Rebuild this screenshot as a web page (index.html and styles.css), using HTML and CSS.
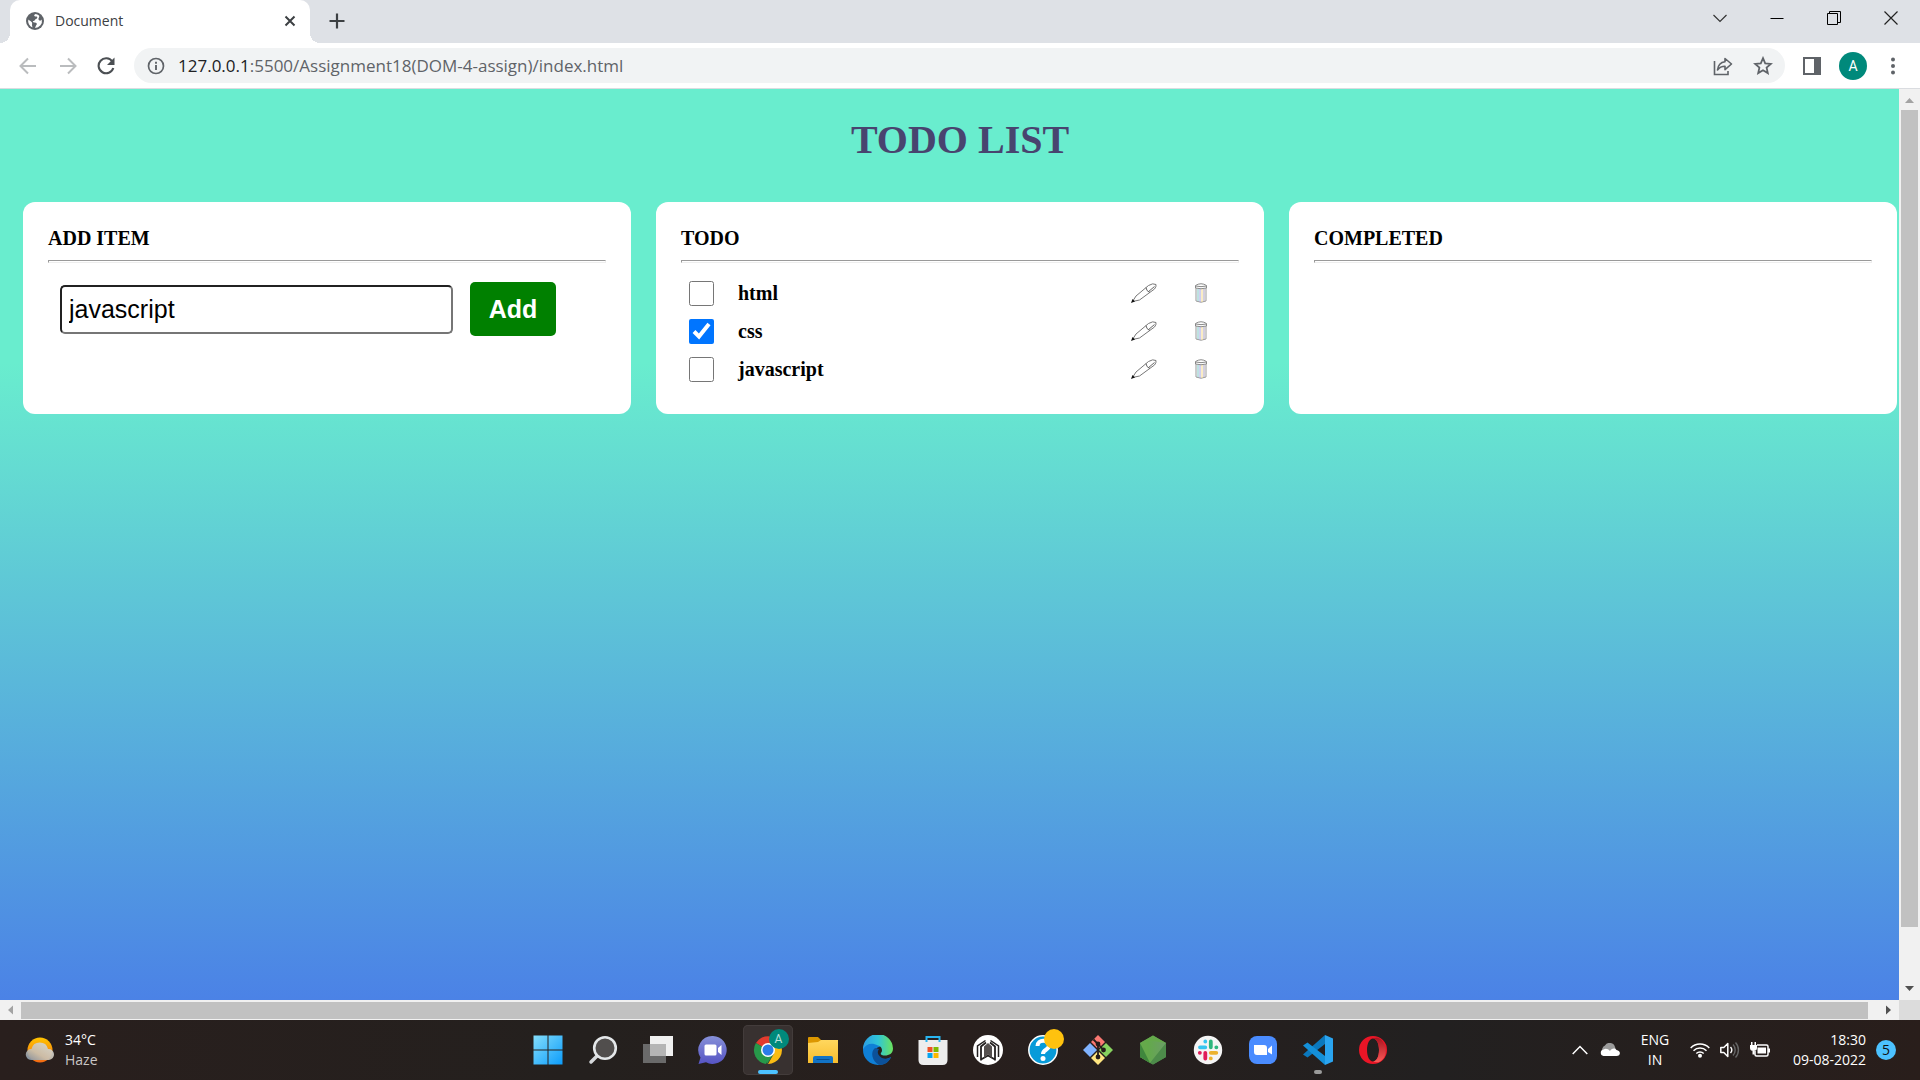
FILE: index.html
```html
<!DOCTYPE html>
<html lang="en">
<head>
<meta charset="utf-8">
<title>Document</title>
<link rel="stylesheet" href="styles.css">
</head>
<body>
<header class="browser">
  <div class="tabstrip">
    <div class="tab">
      <svg class="globe" width="18" height="18" viewBox="0 0 18 18"><circle cx="9" cy="9" r="9" fill="#5f6368"/><path d="M9.500 2C7.500 3 8 4.500 10 4.500c2 0 1.500 2 0 2.500-1.500.5-1 2-2.500 2-1 0-1 1.500 1 1.500 2.500 0 3 1.500 1.500 3L9 16a7 7 0 0 0 6.800-8.500C15 9 13 9 12.500 7.500 12 6 14 5 13 3.500A7 7 0 0 0 9.500 2zM2.300 7.500c1 1 2.500 1.500 3.700 3 .5 1-.5 2 .5 5A7 7 0 0 1 2.300 7.500z" fill="#fff"/></svg>
      <span class="tab-title">Document</span>
      <button class="plain tab-close" aria-label="Close tab"><svg width="12" height="12" viewBox="0 0 12 12"><path d="M1.500 1.500l9 9M10.500 1.500l-9 9" stroke="#3c4043" stroke-width="2"/></svg></button>
    </div>
    <button class="plain new-tab" aria-label="New tab"><svg width="16" height="16" viewBox="0 0 16 16"><path d="M8 0.500v15M0.500 8h15" stroke="#3c4043" stroke-width="2.200"/></svg></button>
    <div class="window-controls">
      <button class="plain" aria-label="Search tabs"><svg width="14" height="14" viewBox="0 0 14 14"><path d="M.5 4L7 10.500 13.500 4" fill="none" stroke="#333" stroke-width="1.200"/></svg></button>
      <button class="plain" aria-label="Minimise"><svg width="14" height="14" viewBox="0 0 14 14"><path d="M.5 7.500h13" stroke="#000"/></svg></button>
      <button class="plain" aria-label="Restore"><svg width="14" height="14" viewBox="0 0 14 14"><path d="M.5 2.500h10v11H.5zM2.500 2.500v-2h11v11h-3" fill="none" stroke="#000"/></svg></button>
      <button class="plain" aria-label="Close"><svg width="14" height="14" viewBox="0 0 14 14"><path d="M.5.5l13 13M13.500.5l-13 13" stroke="#222" stroke-width="1.200"/></svg></button>
    </div>
  </div>
  <div class="toolbar">
    <button class="plain" aria-label="Back"><svg width="18" height="18" viewBox="0 0 18 18"><path d="M17 9H2M9 1.500L1.500 9 9 16.500" fill="none" stroke="#babcbe" stroke-width="2"/></svg></button>
    <button class="plain" aria-label="Forward"><svg width="18" height="18" viewBox="0 0 18 18"><path d="M1 9h15M9 1.500L16.500 9 9 16.500" fill="none" stroke="#babcbe" stroke-width="2"/></svg></button>
    <button class="plain" aria-label="Reload"><svg width="18" height="18" viewBox="0 0 18 18"><path d="M15.300 4.500A7.500 7.500 0 1 0 16.300 11" fill="none" stroke="#4b4f53" stroke-width="2.100"/><path d="M17.500.5v7.500H10z" fill="#4b4f53"/></svg></button>
    <div class="address">
      <svg width="18" height="18" viewBox="0 0 18 18"><circle cx="9" cy="9" r="7.500" fill="none" stroke="#5f6368" stroke-width="1.700"/><path d="M9 8v5M9 4.700v2" stroke="#5f6368" stroke-width="1.900"/></svg>
      <span class="url"><span class="host">127.0.0.1</span>:5500/Assignment18(DOM-4-assign)/index.html</span>
      <button class="plain" aria-label="Share"><svg width="20" height="20" viewBox="0 0 20 20"><path d="M1.500 5v13.500H15V15" fill="none" stroke="#5f6368" stroke-width="1.600"/><path d="M12 2.500v3.300C7.500 6.300 5 9.500 4.500 14c2-2.800 4.300-3.800 7.500-3.800v3.500l6.500-5.700z" fill="none" stroke="#5f6368" stroke-width="1.600" stroke-linejoin="round"/></svg></button>
      <button class="plain" aria-label="Bookmark"><svg width="20" height="20" viewBox="0 0 20 20"><path d="M10 2.200l2.200 5.200 5.600.5-4.200 3.700 1.200 5.500-4.800-2.900-4.800 2.900 1.200-5.500L2.200 7.900l5.600-.5z" fill="none" stroke="#5f6368" stroke-width="1.800"/></svg></button>
    </div>
    <button class="plain" aria-label="Side panel"><svg width="18" height="18" viewBox="0 0 18 18"><path d="M0 0h18v18H0zM2 2v14h9V2z" fill="#5f6368" fill-rule="evenodd"/></svg></button>
    <button class="plain avatar">A</button>
    <button class="plain menu" aria-label="Menu"><svg width="6" height="18" viewBox="0 0 6 18"><g fill="#5f6368"><circle cx="3" cy="2.500" r="2"/><circle cx="3" cy="9" r="2"/><circle cx="3" cy="15.500" r="2"/></g></svg></button>
  </div>
</header>

<div class="viewport">
  <main class="page">
    <h1 class="title">TODO LIST</h1>
    <div class="cards">
      <section class="card">
        <h2 class="card-title">ADD ITEM</h2>
        <hr class="rule">
        <form class="add-form" onsubmit="return false">
          <input class="add-input" type="text" value="javascript" aria-label="New item">
          <button class="add-button" type="submit">Add</button>
        </form>
      </section>
      <section class="card">
        <h2 class="card-title">TODO</h2>
        <hr class="rule">
        <ul class="todo-list">
          <li class="todo-row">
            <input class="tick" type="checkbox" id="item-html"><label class="todo-text" for="item-html">html</label>
            <button class="plain" aria-label="Edit html"><svg width="26" height="20" viewBox="0 0 26 20"><use href="#pen"/></svg></button>
            <button class="plain" aria-label="Delete html"><svg width="12" height="20" viewBox="0 0 12 20"><use href="#bin"/></svg></button>
          </li>
          <li class="todo-row">
            <input class="tick" type="checkbox" id="item-css" checked><label class="todo-text" for="item-css">css</label>
            <button class="plain" aria-label="Edit css"><svg width="26" height="20" viewBox="0 0 26 20"><use href="#pen"/></svg></button>
            <button class="plain" aria-label="Delete css"><svg width="12" height="20" viewBox="0 0 12 20"><use href="#bin"/></svg></button>
          </li>
          <li class="todo-row">
            <input class="tick" type="checkbox" id="item-js"><label class="todo-text" for="item-js">javascript</label>
            <button class="plain" aria-label="Edit javascript"><svg width="26" height="20" viewBox="0 0 26 20"><use href="#pen"/></svg></button>
            <button class="plain" aria-label="Delete javascript"><svg width="12" height="20" viewBox="0 0 12 20"><use href="#bin"/></svg></button>
          </li>
        </ul>
      </section>
      <section class="card">
        <h2 class="card-title">COMPLETED</h2>
        <hr class="rule">
      </section>
    </div>
  </main>
  <div class="scroll-y">
    <svg width="21" height="21" viewBox="0 0 21 21"><path d="M6 14l4.500-5 4.500 5z" fill="#a3a3a3"/></svg>
    <div class="thumb-y"></div>
    <div class="rest-y"></div>
    <svg width="21" height="21" viewBox="0 0 21 21"><path d="M6 7l4.500 5L15 7z" fill="#505050"/></svg>
  </div>
  <div class="scroll-x">
    <svg width="21" height="20" viewBox="0 0 21 20"><path d="M13 5.500v9L8 10z" fill="#a3a3a3"/></svg>
    <div class="thumb-x"></div>
    <div class="rest-x"></div>
    <svg width="21" height="20" viewBox="0 0 21 20"><path d="M8 5.500v9l5-4.500z" fill="#505050"/></svg>
  </div>
  <div class="corner"></div>
</div>

<footer class="taskbar">
  <div class="weather">
    <svg width="30" height="28" viewBox="0 0 30 28"><circle cx="15" cy="14" r="12.500" fill="url(#sun)"/><path d="M6 24a5.500 5.500 0 0 1 .5-11 8.500 8.500 0 0 1 16.500 0A5.500 5.500 0 0 1 24 24z" fill="url(#cloud)" opacity=".93"/></svg>
    <div class="weather-text"><span>34°C</span><span class="dim">Haze</span></div>
  </div>
  <nav class="apps" aria-label="Apps">
    <button class="plain app" aria-label="Start"><svg width="30" height="30" viewBox="0 0 30 30"><path d="M.5.5h14v14H.5zM15.500.5h14v14h-14zM.5 15.500h14v14H.5zM15.500 15.500h14v14h-14z" fill="url(#win)"/></svg></button>
    <button class="plain app" aria-label="Search"><svg width="30" height="30" viewBox="0 0 30 30"><path d="M9.500 20.500L3 27" stroke="#d5d8db" stroke-width="3.500" stroke-linecap="round"/><circle cx="17" cy="13" r="10.800" fill="#514e4d" stroke="#e4e7e9" stroke-width="2.600"/></svg></button>
    <button class="plain app" aria-label="Task view"><svg width="30" height="30" viewBox="0 0 30 30"><path d="M0 9h23v19H0z" fill="#6a6a6a"/><path d="M7 1h23v20H7z" fill="#f0f0f0"/><path d="M7 9h16v12H7z" fill="#b5b5b5"/></svg></button>
    <button class="plain app" aria-label="Chat"><svg width="30" height="30" viewBox="0 0 30 30"><path d="M15 1a14 14 0 1 1-7 26.300L.5 29l2-6.500A14 14 0 0 1 15 1z" fill="url(#chat)"/><rect x="6.500" y="9.500" width="12" height="11" rx="1.500" fill="#fff"/><path d="M20 13l3.500-3v10L20 17z" fill="#fff"/></svg></button>
    <button class="plain app active" aria-label="Chrome"><svg width="30" height="30" viewBox="0 0 30 30"><path d="M15 15L3 8a14 14 0 0 1 24.100 0z" fill="#e33b2e"/><path d="M15 15l-2 14A14 14 0 0 1 2.900 8z" fill="#27994a"/><path d="M9 18.500L14 29l7-10.500z" fill="#27994a"/><path d="M15 29a14 14 0 0 0 12.100-21H15l6 10.500z" fill="#fbbc14"/><circle cx="15" cy="15" r="7" fill="#fff"/><circle cx="15" cy="15" r="5.500" fill="#2b7de9"/></svg><span class="profile">A</span></button>
    <button class="plain app" aria-label="File Explorer"><svg width="30" height="30" viewBox="0 0 30 30"><path d="M0 3q0-1 1-1h9l3 3v6H0z" fill="#dc9700"/><path d="M0 8l10-1 3-2h17v23H0z" fill="url(#folder)"/><path d="M5 28v-5q0-2 2-2h16q2 0 2 2v5z" fill="#1273c5"/><path d="M8.500 24.500h13" stroke="#064e91"/></svg></button>
    <button class="plain app" aria-label="Edge"><svg width="30" height="30" viewBox="0 0 30 30"><path d="M0 15C0 9 6 6 11 8c5 1 6 4 6 4-6 0-6 8 0 11 4 2 8 1 11-1-2 5-7 8-13 8A15 15 0 0 1 0 15z" fill="#0f7fd6"/><path d="M12 13c-5 4-3 13 4 17 6 0 10-3 12-8-3 2-8 2.500-11-.5-2.500-2.500-3-5-1-7.500z" fill="#0c519a"/><path d="M0 14.500A15 15 0 0 1 30 13.500c0 5-4 7-8 7-3 0-5-1-4-2.500 2-2.500 1-6.500-3-7.500C9 7.500 3 8.500 0 14.500z" fill="url(#edge)"/></svg></button>
    <button class="plain app" aria-label="Store"><svg width="30" height="30" viewBox="0 0 30 30"><path d="M.5 5h29v20q0 5-5 5h-19q-5 0-5-5z" fill="#ededed"/><path d="M8.500 7V2h13v5" fill="none" stroke="#29b5f0" stroke-width="2"/><path d="M9.500 12h5v5h-5z" fill="#ef5125"/><path d="M15.500 12h5v5h-5z" fill="#7eb900"/><path d="M9.500 18h5v5h-5z" fill="#06a4ef"/><path d="M15.500 18h5v5h-5z" fill="#fdb800"/></svg></button>
    <button class="plain app" aria-label="Armoury"><svg width="30" height="30" viewBox="0 0 30 30"><circle cx="15" cy="15" r="15" fill="#fff"/><path d="M4.500 22V11L12.500 5.500M25.500 22V11L17.500 5.500" fill="none" stroke="#242121" stroke-width="1.500"/><path d="M8 25.500V11.500L13 7.500M22 25.500V11.500L17 7.500M8 24.500l7-4 7 4" fill="none" stroke="#242121" stroke-width="1.800"/><path d="M11 11.500L15 8l4 3.500V23l-4-3.500-4 3.500z" fill="#55504f"/></svg></button>
    <button class="plain app" aria-label="Help"><svg class="spill" width="30" height="42" viewBox="0 0 30 42"><circle cx="15" cy="21" r="14.200" fill="#079bd9" stroke="#fff" stroke-width="1.500"/><path d="M9.500 17c0-7 11.500-7 11.500-.5 0 4.500-6 4-6 8.500" fill="none" stroke="#fff" stroke-width="4"/><circle cx="15" cy="29.500" r="2.500" fill="#fff"/><circle cx="26" cy="10" r="10" fill="#ffc20e"/></svg></button>
    <button class="plain app" aria-label="Git"><svg width="30" height="30" viewBox="0 0 30 30"><path d="M15 0l7 7-7 7-7-7z" fill="#fa7872"/><path d="M0 15l7-7 7 7-7 7z" fill="#80b3ff"/><path d="M16 15l7-7 7 7-7 7z" fill="#87d35f"/><path d="M8 23l7-7 7 7-7 7z" fill="#ffe680"/><path d="M10.500 4.500L15 9v13M15 9l5.500 6" fill="none" stroke="#251c1a" stroke-width="1.800"/><g fill="#251c1a"><circle cx="15" cy="9" r="2.400"/><circle cx="15" cy="22" r="2.400"/><circle cx="20.500" cy="15" r="2.400"/></g></svg></button>
    <button class="plain app" aria-label="Node"><svg width="30" height="30" viewBox="0 0 30 30"><path d="M15 .5L28 8v14l-13 7.500L2 22V8z" fill="#57984d"/><path d="M2 8l13-7.500L28 8l-16 20L2 22z" fill="#65a94b"/><path d="M8 5l20 3-16 20z" fill="url(#node)"/><path d="M2 8l10 20-10-6z" fill="#3f873d"/><path d="M28 8L12 28l3 1.500L28 22z" fill="#4d8b4a"/></svg></button>
    <button class="plain app" aria-label="Slack"><svg width="30" height="30" viewBox="0 0 30 30"><circle cx="15" cy="15" r="14.200" fill="#f5f5f5"/><g stroke-width="3.800" stroke-linecap="round"><path d="M12.300 6.500v.1M7 12.300h5.300" stroke="#36c5f0"/><path d="M17.800 6.500v5.800M23.300 12.300h.1" stroke="#2eb67d"/><path d="M17.800 17.800h5.500M17.800 23.300v.1" stroke="#ecb22e"/><path d="M12.300 17.800v5.700M6.800 17.800h.1" stroke="#e01e5a"/></g></svg></button>
    <button class="plain app" aria-label="Zoom"><svg width="30" height="30" viewBox="0 0 30 30"><rect x="1" y="1" width="28" height="28" rx="8" fill="#4a8cff"/><path d="M6 10h10q3 0 3 3v7H9q-3 0-3-3zM20 14l4-3.500v9L20 17z" fill="#fff"/></svg></button>
    <button class="plain app running" aria-label="Code"><svg width="30" height="30" viewBox="0 0 30 30"><path d="M22 0l8 3.500v23L22 30z" fill="#2aa4f0"/><path d="M22 0v9L4.500 22.500 0 19.500z" fill="#0b78bd"/><path d="M0 10.500L4.500 7.500 22 21v9z" fill="#1490d9"/></svg></button>
    <button class="plain app" aria-label="Opera"><svg width="30" height="30" viewBox="0 0 30 30"><path d="M15 1a14 14 0 1 0 0 28 14 14 0 1 0 0-28zM15 3.500c3.500 0 6 5 6 11.500s-2.500 11.500-6 11.500S9 21.500 9 15s2.500-11.500 6-11.500z" fill="#ea1526" fill-rule="evenodd"/><path d="M15 3.500c5-2 9 1 10.500 4.500 4 6 2.500 14-2 17.500-3 2.500-6 2-8.500 1 3.500 0 6-5 6-11.500s-2.500-11.500-6-11.500z" fill="url(#opera)"/></svg></button>
  </nav>
  <div class="tray">
    <svg width="16" height="10" viewBox="0 0 16 10"><path d="M.7 9L8 1.500 15.300 9" fill="none" stroke="#fff" stroke-width="1.500"/></svg>
    <svg class="cloud" width="20" height="14" viewBox="0 0 20 14"><path d="M3 10a5 5 0 0 1 2-7.500A5.500 5.500 0 0 1 15 4l2 6z" fill="#9a9a9a"/><path d="M3.500 13a3.300 3.300 0 0 1 0-6.500C6 5 8 6 10 8c1-3 5.500-3.500 6.500-1 4.500.5 4.500 6 0 6z" fill="#fff"/></svg>
    <div class="language"><span>ENG</span><span>IN</span></div>
    <svg width="20" height="16" viewBox="0 0 20 16"><path d="M.7 6a13 13 0 0 1 18.600 0M3.500 8.800a9.200 9.200 0 0 1 13 0M6.300 11.500a5.300 5.300 0 0 1 7.400 0" fill="none" stroke="#fff" stroke-width="1.500"/><circle cx="10" cy="13.700" r="2" fill="#fff"/></svg>
    <svg width="20" height="16" viewBox="0 0 20 16"><path d="M.8 5.500h3l4-4v13l-4-4h-3z" fill="none" stroke="#fff" stroke-width="1.500" stroke-linejoin="round"/><path d="M10.500 5a4.500 4.500 0 0 1 0 6" fill="none" stroke="#fff" stroke-width="1.400"/><path d="M13 2.500a8 8 0 0 1 0 11M15.500.5a11 11 0 0 1 0 15" fill="none" stroke="#666" stroke-width="1.400"/></svg>
    <svg width="20" height="16" viewBox="0 0 20 16"><path d="M7 3h9.500q1.500 0 1.500 1.500v8q0 1.500-1.500 1.500H6.500Q5 14 5 12.500V9" fill="none" stroke="#fff" stroke-width="1.500"/><path d="M7.500 5.500H16v6H7.500zM18 6.500h2v4h-2zM0 3h7v3q0 3-3.500 3T0 6zM1 0h1.500v3H1zM4.500 0H6v3H4.500zM2.500 8.500h2v4h-2z" fill="#fff"/></svg>
    <div class="clock"><span>18:30</span><span>09-08-2022</span></div>
    <span class="count">5</span>
  </div>
</footer>

<svg class="defs" width="0" height="0" aria-hidden="true">
  <defs>
    <g id="pen"><path d="M1.500 18.500L5 13 17.500 2.500Q22-.3 25 1.500q.5 2-1.500 4.500L8.500 17z" fill="#fff" stroke="#777" stroke-width="1"/><path d="M15 4.500l1 3 3 2M17 9l6.500-5.500" fill="none" stroke="#666"/><path d="M0 20l1.500-4 2.500 2.500z" fill="#111"/></g>
    <g id="bin"><path d="M1 4.500V18q5 2.500 10 0V4.500z" fill="#fff" stroke="#999"/><path d="M3 6v12" stroke="#7fc4c4"/><path d="M5 6v13" stroke="#9da0e0"/><path d="M7 6v13" stroke="#f5d98c"/><path d="M9 6v12" stroke="#a8a0c0"/><path d="M.5 2.500Q6-1 11.500 2.500V5Q6 6.500.5 5z" fill="#fff" stroke="#888"/><path d="M.5 3q5.500 1.300 11 0" fill="none" stroke="#888"/></g>
    <linearGradient id="sun" x1="0" y1="0" x2="0" y2="1"><stop offset="0" stop-color="#ffc400"/><stop offset="1" stop-color="#f46a14"/></linearGradient>
    <linearGradient id="cloud" x1="1" y1="0" x2="0" y2="1"><stop offset="0" stop-color="#d5dce0"/><stop offset=".6" stop-color="#c9c0b0"/><stop offset="1" stop-color="#7d90a5"/></linearGradient>
    <linearGradient id="win" gradientUnits="userSpaceOnUse" x1="0" y1="0" x2="30" y2="30"><stop offset="0" stop-color="#86dffc"/><stop offset="1" stop-color="#0a9bfa"/></linearGradient>
    <linearGradient id="chat" x1="0" y1="0" x2="0" y2="1"><stop offset="0" stop-color="#8690d8"/><stop offset="1" stop-color="#5654c4"/></linearGradient>
    <linearGradient id="folder" x1="0" y1="0" x2="0" y2="1"><stop offset="0" stop-color="#ffd75e"/><stop offset="1" stop-color="#f8bd2d"/></linearGradient>
    <linearGradient id="edge"><stop offset="0" stop-color="#2b9de4"/><stop offset=".5" stop-color="#30c5d8"/><stop offset="1" stop-color="#6be35c"/></linearGradient>
    <linearGradient id="node"><stop offset="0" stop-color="#62ab47"/><stop offset="1" stop-color="#6c9c68"/></linearGradient>
    <linearGradient id="opera" x1="0" y1="0" x2="0" y2="1"><stop offset="0" stop-color="#a81420"/><stop offset="1" stop-color="#fa5a58"/></linearGradient>
  </defs>
</svg>
</body>
</html>
```
FILE: styles.css
```css
* {
  box-sizing: border-box;
}

body {
  margin: 0;
  min-height: 100vh;
  display: flex;
  flex-direction: column;
  font-family: "Open Sans", "Noto Sans", sans-serif;
  font-size: 14px;
  line-height: 20px;
}

svg {
  display: block;
  flex: none;
}

.defs {
  position: absolute;
}

.spill {
  overflow: visible;
}

.plain {
  border: 0;
  padding: 0;
  background: none;
  color: inherit;
  font: inherit;
  display: flex;
  align-items: center;
  justify-content: center;
  flex: none;
}

/* Browser chrome */
.tabstrip {
  display: flex;
  height: 43px;
  padding-left: 10px;
  background: #dee1e6;
}

.tab {
  position: relative;
  display: flex;
  align-items: center;
  gap: 11px;
  width: 300px;
  padding: 0 14px 2px 16px;
  background: #fff;
  border-radius: 10px 10px 0 0;
  color: #3c4043;
}

.tab::before,
.tab::after {
  content: "";
  position: absolute;
  bottom: 0;
  width: 10px;
  height: 10px;
}

.tab::before {
  right: 100%;
  background: radial-gradient(circle at 0 0, #dee1e6 10px, #fff 10px);
}

.tab::after {
  left: 100%;
  background: radial-gradient(circle at 100% 0, #dee1e6 10px, #fff 10px);
}

.tab-title {
  flex: 1;
}

.new-tab {
  width: 54px;
  padding-bottom: 2px;
}

.window-controls {
  display: flex;
  align-items: flex-start;
  margin-left: auto;
  padding-right: 1px;
}

.window-controls .plain {
  width: 57px;
  height: 36px;
}

.toolbar {
  display: flex;
  align-items: center;
  gap: 18px;
  height: 46px;
  padding: 0 24px 0 17px;
  border-bottom: 1px solid #dadce0;
  background: #fff;
}

.toolbar > .plain:nth-child(-n+2) {
  width: 22px;
}

.address {
  display: flex;
  flex: 1;
  align-items: center;
  gap: 20px;
  height: 35px;
  margin-left: 1px;
  padding: 0 12px 0 13px;
  border-radius: 18px;
  background: #f1f3f4;
}

.url {
  flex: 1;
  margin-left: -7px;
  color: #5f6368;
  font-size: 17px;
  line-height: 24px;
}

.host {
  color: #202124;
}

.avatar {
  width: 28px;
  height: 28px;
  border-radius: 50%;
  background: #00897b;
  color: #fff;
  font-family: Roboto, sans-serif;
}

.menu {
  margin-left: 5px;
}

/* Page and its scrollbars */
.viewport {
  display: grid;
  flex: 1;
  grid-template-columns: 1fr 21px;
  grid-template-rows: 1fr 20px;
}

.page {
  padding: 29px 2px 28px 23px;
  background: linear-gradient(#69edce 30%, #4b82e6);
  font-family: "Liberation Serif", serif;
}

.title {
  margin: 0 0 40px;
  color: #48446f;
  font-size: 40px;
  line-height: 44px;
  text-align: center;
}

.cards {
  display: grid;
  grid-template-columns: repeat(3, 1fr);
  gap: 25px;
}

.card {
  padding: 25px;
  border-radius: 12px;
  background: #fff;
}

.card-title {
  margin: 0 0 11px;
  font-size: 20px;
  line-height: 22px;
}

.rule {
  height: 3px;
  margin: 0;
  border: 1px solid;
  border-color: #9a9a9a #eee #eee #9a9a9a;
}

.add-form {
  display: flex;
  align-items: center;
  gap: 17px;
  margin: 19px 12px 0;
}

.add-input,
.add-button {
  border-radius: 5px;
  font-family: "Liberation Sans", sans-serif;
  font-size: 25px;
}

.add-input {
  width: 393px;
  min-width: 0;
  height: 49px;
  padding: 0 7px;
  border: 2px solid;
  border-color: #212121 #767676 #767676 #212121;
}

.add-button {
  width: 86px;
  height: 54px;
  padding: 0;
  border: 0;
  background: #008000;
  color: #fff;
  font-weight: bold;
}

.todo-list {
  margin: 11px 0 0;
  padding: 0 32px 1px 8px;
  list-style: none;
}

.todo-row {
  display: flex;
  align-items: center;
  height: 38px;
}

.tick {
  width: 25px;
  height: 25px;
  margin: 0 24px 0 0;
}

.todo-text {
  flex: 1;
  font-size: 20px;
  font-weight: bold;
  line-height: 22px;
}

.todo-row .plain + .plain {
  margin-left: 38px;
}

.scroll-x,
.scroll-y {
  display: flex;
  background: #f1f1f1;
}

.scroll-y {
  flex-direction: column;
}

.thumb-y {
  flex: 817;
  margin: 0 2px;
  background: #c1c1c1;
}

.rest-y {
  flex: 52;
}

.thumb-x {
  flex: 1847;
  margin: 2px 0 1px;
  background: #c1c1c1;
}

.rest-x {
  flex: 10;
}

.corner {
  background: #dcdcdc;
}

/* Taskbar */
.taskbar {
  display: grid;
  grid-template-columns: 1fr auto 1fr;
  align-items: center;
  height: 60px;
  padding: 0 24px;
  background: linear-gradient(90deg, #291f1d, #24201e 30%, #281f1d 50%, #222020 75%, #291e1b);
  color: #fff;
}

.weather {
  display: flex;
  align-items: center;
  gap: 10px;
  padding-left: 1px;
}

.weather-text,
.language,
.clock {
  display: flex;
  flex-direction: column;
}

.dim {
  color: #c9c6c5;
}

.apps {
  display: flex;
  gap: 5px;
}

.app {
  position: relative;
  width: 50px;
  height: 50px;
  border-radius: 5px;
}

.active {
  background: #383130;
  box-shadow: inset 0 0 0 1px #433c3b;
}

.active::after,
.running::after {
  content: "";
  position: absolute;
  bottom: 1px;
  left: 50%;
  width: 20px;
  height: 4px;
  border-radius: 2px;
  background: #4cc2ff;
  transform: translateX(-50%);
}

.running::after {
  width: 8px;
  background: #9a9a9a;
}

.profile {
  position: absolute;
  top: 4px;
  right: 4px;
  width: 20px;
  height: 20px;
  border-radius: 50%;
  background: #00897b;
  color: #b9e0dc;
  font-family: Roboto, sans-serif;
  font-size: 12px;
}

.tray {
  display: flex;
  align-items: center;
  justify-content: flex-end;
  gap: 10px;
}

.language {
  width: 50px;
  align-items: center;
}

.tray .cloud {
  margin-left: 2px;
}

.clock {
  width: 86px;
  align-items: flex-end;
}

.count {
  width: 20px;
  height: 20px;
  border-radius: 50%;
  background: #4cc2ff;
  color: #111;
  text-align: center;
}
```
